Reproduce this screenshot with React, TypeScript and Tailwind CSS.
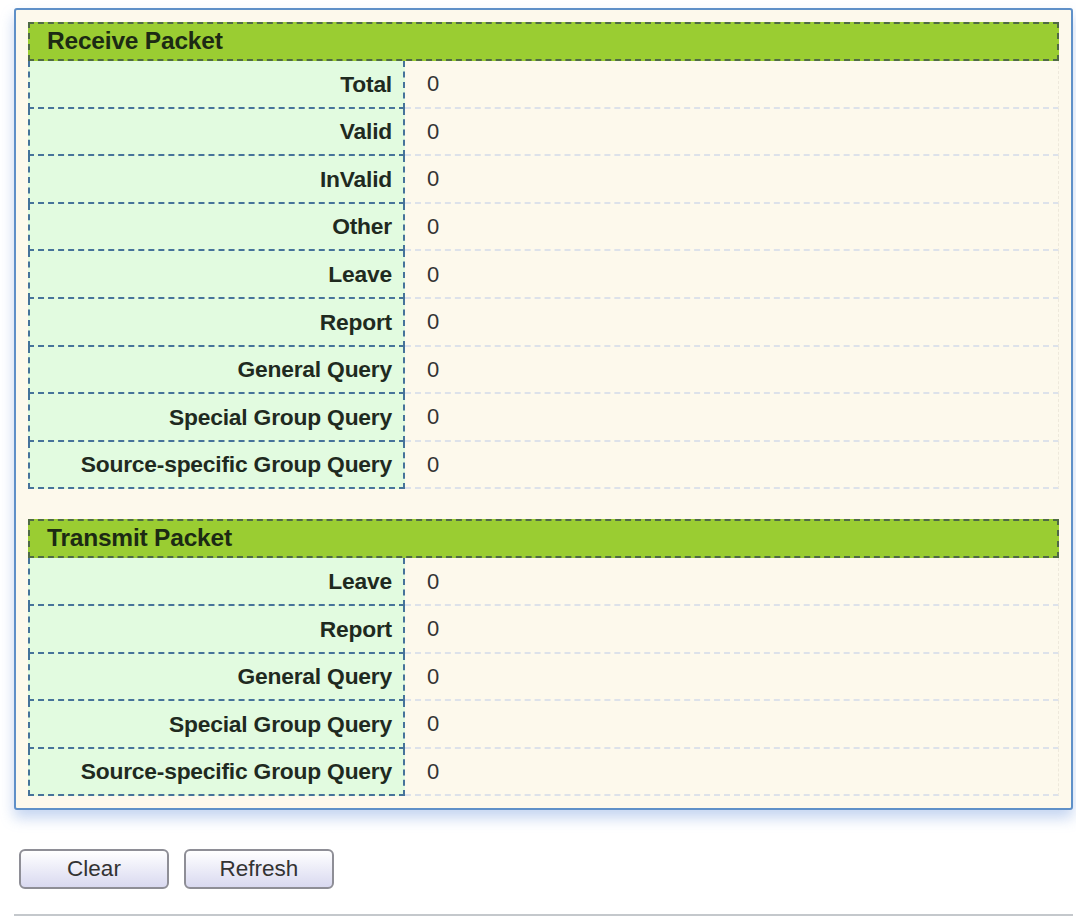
import type { FC, JSX } from "react";

interface IStatRow {
    label: string;
    value: number;
}

const receiveRows: IStatRow[] = [
    { label: "Total", value: 0 },
    { label: "Valid", value: 0 },
    { label: "InValid", value: 0 },
    { label: "Other", value: 0 },
    { label: "Leave", value: 0 },
    { label: "Report", value: 0 },
    { label: "General Query", value: 0 },
    { label: "Special Group Query", value: 0 },
    { label: "Source-specific Group Query", value: 0 },
];

const transmitRows: IStatRow[] = [
    { label: "Leave", value: 0 },
    { label: "Report", value: 0 },
    { label: "General Query", value: 0 },
    { label: "Special Group Query", value: 0 },
    { label: "Source-specific Group Query", value: 0 },
];

const Section: FC<{ title: string; rows: IStatRow[] }> = ({ title, rows }): JSX.Element => {
    return (
        <div className="flex flex-col">
            <div className="h-[39px] bg-[#9acd32] border-2 border-dashed border-[#4f6a45] flex items-center pl-[17px] font-bold text-[24.5px] tracking-[-0.2px] text-[#1c2a14]">
                {title}
            </div>
            {rows.map((row, index) => (
                <div key={index} className="flex h-[47.6px]">
                    <div className="w-[377px] shrink-0 bg-[#e2fbe0] border-x-2 border-b-2 border-dashed border-[#46739a] flex items-center justify-end pr-[11px] font-bold text-[22.8px] tracking-[-0.2px] text-[#1f2a1f]">
                        {row.label}
                    </div>
                    <div className="flex-1 flex items-center pl-[22px] text-[22px] text-[#333] border-b-2 border-r border-dashed border-b-[#dde2ea] border-r-[#eee9dc]">
                        {row.value}
                    </div>
                </div>
            ))}
        </div>
    );
};

export default function App(): JSX.Element {
    return (
        <div className="min-h-screen bg-white font-['Liberation_Sans',Arial,sans-serif] pt-[8px] pl-[14px] pr-[3px]">
            <div className="border-2 border-[#5f90c8] rounded-[3px] bg-[#fdf9ec] px-[12px] pt-[12px] pb-[12px] flex flex-col gap-[30px] shadow-[0_8px_14px_rgba(110,150,220,0.4)]">
                <Section title="Receive Packet" rows={receiveRows} />
                <Section title="Transmit Packet" rows={transmitRows} />
            </div>

            <div className="flex gap-[15px] mt-[39px] pl-[5px]">
                <button className="w-[150px] h-[40px] rounded-[6px] border-2 border-[#8e8e96] bg-gradient-to-b from-white to-[#d9d9f0] text-[22.5px] text-[#333]">
                    Clear
                </button>
                <button className="w-[150px] h-[40px] rounded-[6px] border-2 border-[#8e8e96] bg-gradient-to-b from-white to-[#d9d9f0] text-[22.5px] text-[#333]">
                    Refresh
                </button>
            </div>

            <div className="mt-[25px] h-[2px] bg-[#c4c8cc]" />
        </div>
    );
}
